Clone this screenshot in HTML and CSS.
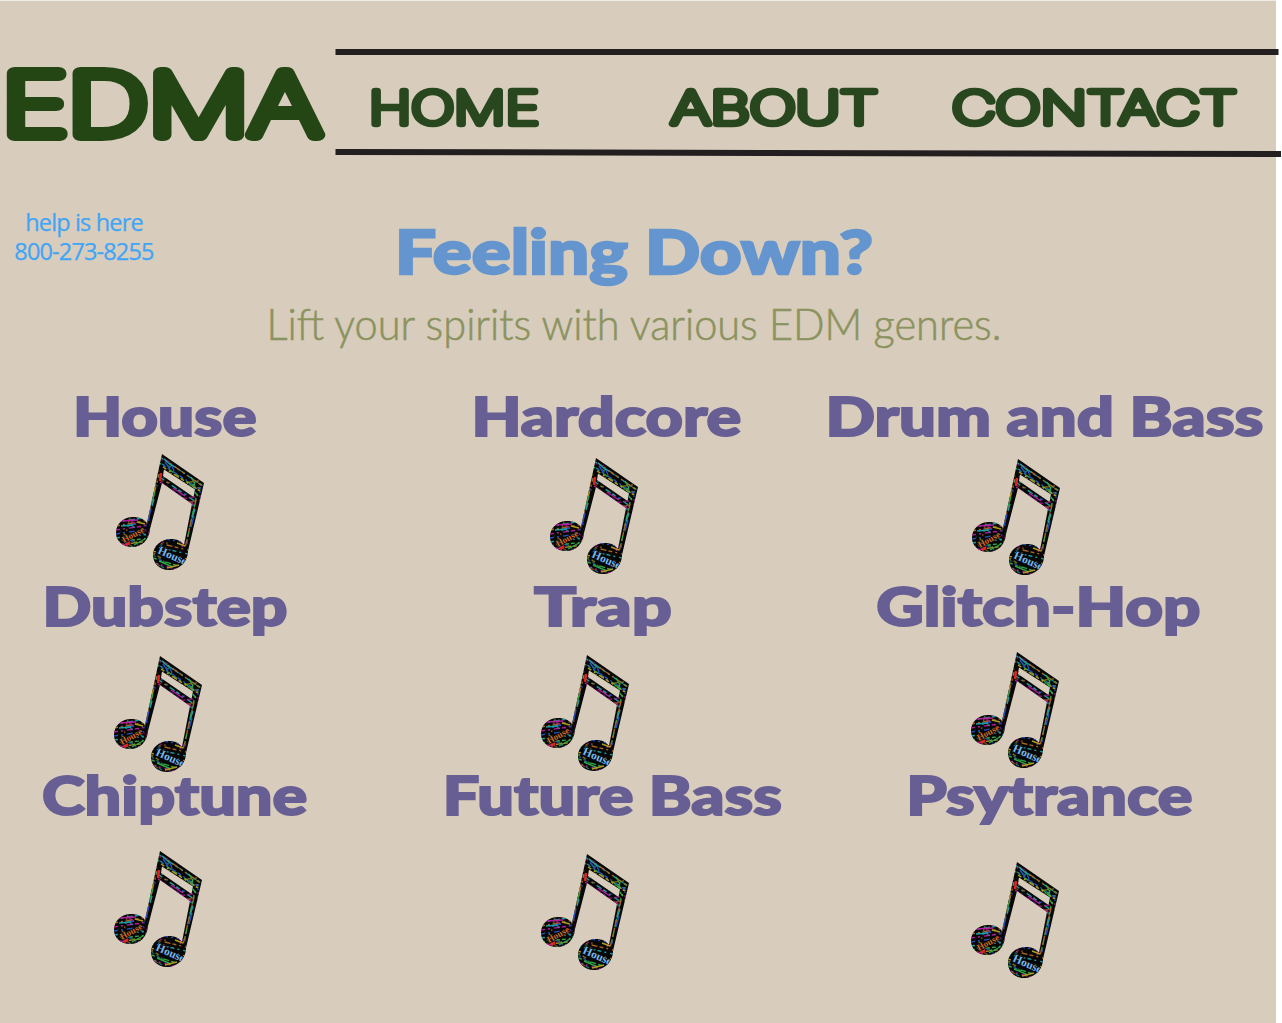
FILE: index.html
```html
<!DOCTYPE html>
<html lang="en">
<head>
<meta charset="utf-8">
<title>EDMA</title>
<link rel="stylesheet" href="styles.css">
</head>
<body>
<svg class="defs" width="0" height="0" aria-hidden="true">
  <defs>
    <clipPath id="note-shape">
      <path d="M46 0 L88 29 L72 97 C72 108 63 116 53 116 C43 116 37 109 37 101 C37 92 45 85 55 85 C61 85 65 87 68 91 L76 50 L46 29 L34 75 C33 86 26 93 16 93 C7 93 0 87 0 79 C0 70 7 63 17 63 C23 63 28 65 31 69 Z M48 15.5 L47 22 L77.5 43 L79 35.5 Z" clip-rule="evenodd"/>
    </clipPath>
    <symbol id="note" viewBox="0 0 90 118">
      <g clip-path="url(#note-shape)">
        <rect width="90" height="118" fill="#080808"/>
        <g class="scraps">
          <g id="scrap-lines" stroke-dasharray="4 3 2 4 6 2">
            <path stroke="#1f9da5" d="M44 3L90 34M45 24L80 48M0 68L34 63M0 84L34 80M36 92L72 100"/>
            <path stroke="#2fa548" d="M42 8L88 39M0 88L34 84M37 104L72 115M80 44L70 91"/>
            <path stroke="#a66524" d="M48 5L88 33M0 72L34 66M38 88L72 96M83 33L69 94M43 20L30 72"/>
            <path stroke="#b31c9b" d="M44 28L78 51M0 76L34 71M38 109L70 118M76 48L66 94"/>
            <path stroke="#ad9b20" d="M47 13L84 37M2 91L34 87M36 97L72 105M39 34L30 67"/>
            <path stroke="#2551bd" d="M46 10L85 36M0 80L34 75M50 85L72 89M36 43L29 76"/>
          </g>
          <use href="#scrap-lines" transform="translate(92 117) rotate(180)" opacity="0.7"/>
          <path stroke="#2551bd" d="M49 8l5 7M56 12l2 5M35 55l-3 12M78 62l-3 11M11 72l9-2"/>
          <path stroke="#2fa548" d="M75 23l4 7M79 28l-2 7M39 38l-3 9M43 107l14 6M77 36l5 6M18 91l11-6"/>
          <path stroke="#b31c9b" d="M57 34l12 8M5 67l17-1M69 82l-2 9M6 90l6 1"/>
          <path stroke="#1f9da5" d="M48 5l8 7M5 72l12-1M38 45l-2 7M79 55l-3 9"/>
          <path stroke="#ad9b20" d="M40 30l-4 6M61 89l8 3M51 114l12-3M21 68l8 2"/>
          <path stroke="#e52222" stroke-width="2.5" d="M45 19l-1 8M10 91l4-3"/>
        </g>
        <text class="note-word note-word-orange" transform="translate(8 89) rotate(-29)">House</text>
        <text class="note-word note-word-blue" transform="translate(41 99) rotate(24)">House</text>
      </g>
    </symbol>
  </defs>
</svg>
<div class="page">
  <header class="header">
    <svg class="logo" width="336" height="110" role="img" aria-label="EDMA">
      <text class="round-text logo-text" x="2" y="85.5" textLength="319" lengthAdjust="spacingAndGlyphs">EDMA</text>
    </svg>
    <nav class="nav">
      <svg class="rules" width="946" height="110" aria-hidden="true"><path d="M0.5 3H943.5M0.5 103L946 105"/></svg>
      <svg class="nav-labels" width="946" height="110">
        <text class="round-text nav-text" x="34" y="74.7" textLength="170" lengthAdjust="spacingAndGlyphs">HOME</text>
        <text class="round-text nav-text" x="336" y="74.7" textLength="207" lengthAdjust="spacingAndGlyphs">ABOUT</text>
        <text class="round-text nav-text" x="617" y="74.7" textLength="285" lengthAdjust="spacingAndGlyphs">CONTACT</text>
      </svg>
    </nav>
  </header>
  <section class="intro">
    <p class="help">help is here<br>800-273-8255</p>
    <div class="headline">
      <h1>Feeling Down?</h1>
      <p class="tagline">Lift your spirits with various EDM genres.</p>
    </div>
  </section>
  <main class="genres">
    <article class="genre house"><h2>House</h2><svg class="note"><use href="#note"/></svg></article>
    <article class="genre hardcore"><h2>Hardcore</h2><svg class="note"><use href="#note"/></svg></article>
    <article class="genre drum"><h2>Drum and Bass</h2><svg class="note"><use href="#note"/></svg></article>
    <article class="genre dubstep"><h2>Dubstep</h2><svg class="note"><use href="#note"/></svg></article>
    <article class="genre trap"><h2>Trap</h2><svg class="note"><use href="#note"/></svg></article>
    <article class="genre glitch"><h2>Glitch-Hop</h2><svg class="note"><use href="#note"/></svg></article>
    <article class="genre chiptune"><h2>Chiptune</h2><svg class="note"><use href="#note"/></svg></article>
    <article class="genre future"><h2>Future Bass</h2><svg class="note"><use href="#note"/></svg></article>
    <article class="genre psy"><h2>Psytrance</h2><svg class="note"><use href="#note"/></svg></article>
  </main>
</div>
</body>
</html>
```
FILE: styles.css
```css
* { box-sizing: border-box; }
html { background: #fff; }
body { margin: 0; overflow: hidden; font-family: Lato, "Liberation Sans", sans-serif; }
h1, h2, p { margin: 0; white-space: nowrap; }
.defs { display: block; }
.page { width: 1276px; height: 1023px; background: #d8ccbc; border-top: 1px solid #eeece5; }
.header { display: flex; width: 1282px; height: 158px; padding-top: 48px; }
.logo { flex: none; width: 335px; }
.nav { display: grid; width: 946px; }
.nav svg { grid-area: 1 / 1; display: block; }
.rules path { fill: none; stroke: #231f20; stroke-width: 6; }
.round-text { font-family: Inter, sans-serif; font-weight: 100; stroke-linejoin: round; stroke-linecap: round; }
.logo-text { font-size: 85px; fill: #244615; stroke: #244615; stroke-width: 12; }
.nav-text { font-size: 45px; fill: #29471f; stroke: #29471f; stroke-width: 6.5; }
.intro { display: grid; grid-template-columns: 168px 932px 1fr; height: 219px; padding-top: 49px; }
.help { color: #41a5f5; font: 23.5px/29px "Open Sans", sans-serif; text-align: center; letter-spacing: -0.85px; -webkit-text-stroke: 0.25px #41a5f5; }
.headline { text-align: center; }
h1 { color: #6495cf; font-size: 61px; font-weight: 900; line-height: 86px; transform: scaleX(1.19); -webkit-text-stroke: 2.4px #6495cf; }
.tagline { color: #8b935f; font-size: 44px; font-weight: 300; line-height: 60px; margin-top: -1px; transform: scaleX(0.943); -webkit-text-stroke: 0.6px #8b935f; }
.genres { display: grid; grid-template-columns: 332px 548px 332px; grid-template-rows: 190px 189px 210px; }
.genre { display: flex; flex-direction: column; align-items: center; }
h2 { flex: none; height: 76px; margin-left: calc(2 * var(--title-shift, 0px)); color: #675f93; font-size: 54px; font-weight: 900; line-height: 76px; transform: scaleX(var(--stretch, 1.2)); -webkit-text-stroke: 2px #675f93; }
.note { flex: none; width: 90px; height: 118px; margin-top: var(--note-drop); margin-left: calc(2 * var(--note-shift)); }
.house { --title-shift: -1px; --note-shift: -5px; --note-drop: 0px; --stretch: 1.18; }
.hardcore { --note-shift: -11px; --note-drop: 4px; }
.drum { --title-shift: -2px; --note-shift: -29px; --note-drop: 5px; --stretch: 1.207; }
.dubstep { --title-shift: -1px; --note-shift: -7px; --note-drop: 12px; --stretch: 1.19; }
.trap { --title-shift: -3.5px; --note-shift: -20px; --note-drop: 11px; --stretch: 1.3; }
.glitch { --title-shift: -7.5px; --note-shift: -30px; --note-drop: 8px; --stretch: 1.215; }
.chiptune { --title-shift: 8.5px; --note-shift: -7px; --note-drop: 18px; }
.future { --title-shift: 6px; --note-shift: -20px; --note-drop: 21px; }
.psy { --title-shift: 3.5px; --note-shift: -30px; --note-drop: 29px; }
.scraps { fill: none; stroke-width: 1.4; }
.note-word { font-family: "Liberation Serif", serif; font-weight: bold; stroke: #080808; stroke-width: 1.5; paint-order: stroke; }
.note-word-orange { fill: #d06c26; font-size: 9px; }
.note-word-blue { fill: #75b7ef; font-size: 11.5px; }
```
